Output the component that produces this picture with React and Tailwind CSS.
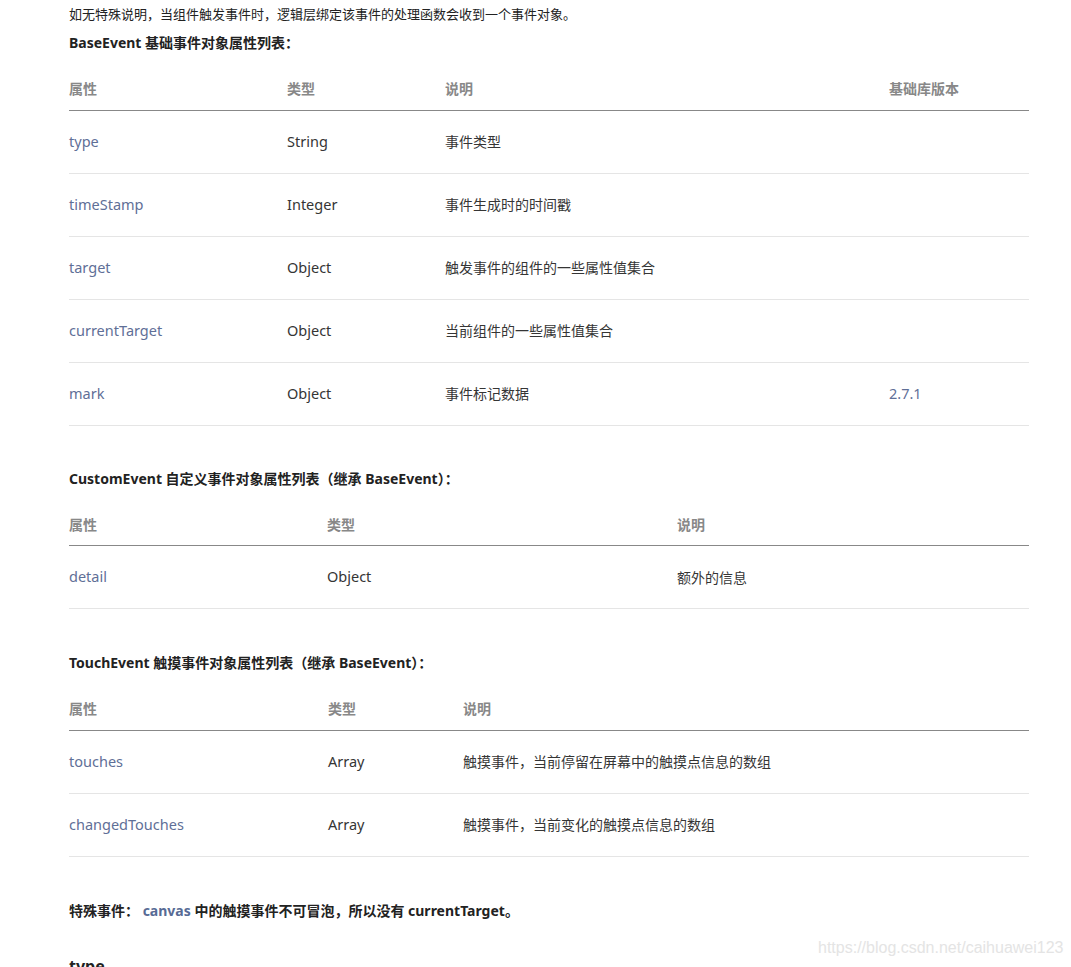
import React from "react";

const font = "font-['Noto_Sans','Noto_Sans_CJK_SC',sans-serif]";

const tables = [
  {
    gap: "mt-[9px]",
    title: <>BaseEvent 基础事件对象属性列表：</>,
    cols: ["w-[218px]", "w-[158px]", "w-[444px]", "w-[140px]"],
    head: ["属性", "类型", "说明", "基础库版本"],
    rows: [
      ["type", "String", "事件类型", ""],
      ["timeStamp", "Integer", "事件生成时的时间戳", ""],
      ["target", "Object", "触发事件的组件的一些属性值集合", ""],
      ["currentTarget", "Object", "当前组件的一些属性值集合", ""],
      ["mark", "Object", "事件标记数据", "2.7.1"],
    ],
  },
  {
    gap: "mt-[43px]",
    title: <>CustomEvent 自定义事件对象属性列表（继承 BaseEvent）：</>,
    cols: ["w-[258px]", "w-[350px]", "w-[352px]"],
    head: ["属性", "类型", "说明"],
    rows: [["detail", "Object", "额外的信息"]],
  },
  {
    gap: "mt-[44px]",
    title: <>TouchEvent 触摸事件对象属性列表（继承 BaseEvent）：</>,
    cols: ["w-[259px]", "w-[135px]", "w-[566px]"],
    head: ["属性", "类型", "说明"],
    rows: [
      ["touches", "Array", "触摸事件，当前停留在屏幕中的触摸点信息的数组"],
      ["changedTouches", "Array", "触摸事件，当前变化的触摸点信息的数组"],
    ],
  },
];

function PropTable({ t }) {
  return (
    <div className={t.gap}>
      <h4 className="text-[14px] leading-5 font-bold text-[#222]">{t.title}</h4>
      <table className="mt-[15px] w-[960px] table-fixed border-collapse">
        <thead>
          <tr className="h-[42px] border-b border-[#888]">
            {t.head.map((h, i) => (
              <th
                key={i}
                className={`${t.cols[i]} p-0 text-left align-middle text-[14px] font-bold text-[#888]`}
              >
                {h}
              </th>
            ))}
          </tr>
        </thead>
        <tbody>
          {t.rows.map((r, j) => (
            <tr key={j} className="h-[63px] border-b border-[#e5e5e5]">
              <td className="p-0 text-[14.5px] text-[#5f6f97]">{r[0]}</td>
              <td className="p-0 text-[14.5px] text-[#353535]">{r[1]}</td>
              <td className="p-0 text-[14px] text-[#353535]">{r[2]}</td>
              {r.length > 3 && (
                <td className="p-0 text-[14.5px] text-[#5f6f97]">{r[3]}</td>
              )}
            </tr>
          ))}
        </tbody>
      </table>
    </div>
  );
}

export default function App() {
  return (
    <div className={`relative h-[967px] w-[1071px] overflow-hidden bg-white ${font}`}>
      <div className="flex flex-col pl-[69px] pt-1">
        <p className="text-[13px] leading-5 text-[#222]">
          如无特殊说明，当组件触发事件时，逻辑层绑定该事件的处理函数会收到一个事件对象。
        </p>
        {tables.map((t, i) => (
          <PropTable key={i} t={t} />
        ))}
        <p className="mt-[44px] text-[14px] leading-5 font-bold text-[#222]">
          特殊事件： <span className="text-[#576b95]">canvas</span> 中的触摸事件不可冒泡，所以没有 currentTarget。
        </p>
        <h3 className="mt-[33px] text-[16px] leading-6 font-bold text-[#222]">type</h3>
      </div>
      <div className="absolute left-[818px] top-[938px] font-['Liberation_Sans',sans-serif] text-[16px] leading-5 text-[#e4e4e4]">
        https://blog.csdn.net/caihuawei123
      </div>
    </div>
  );
}
